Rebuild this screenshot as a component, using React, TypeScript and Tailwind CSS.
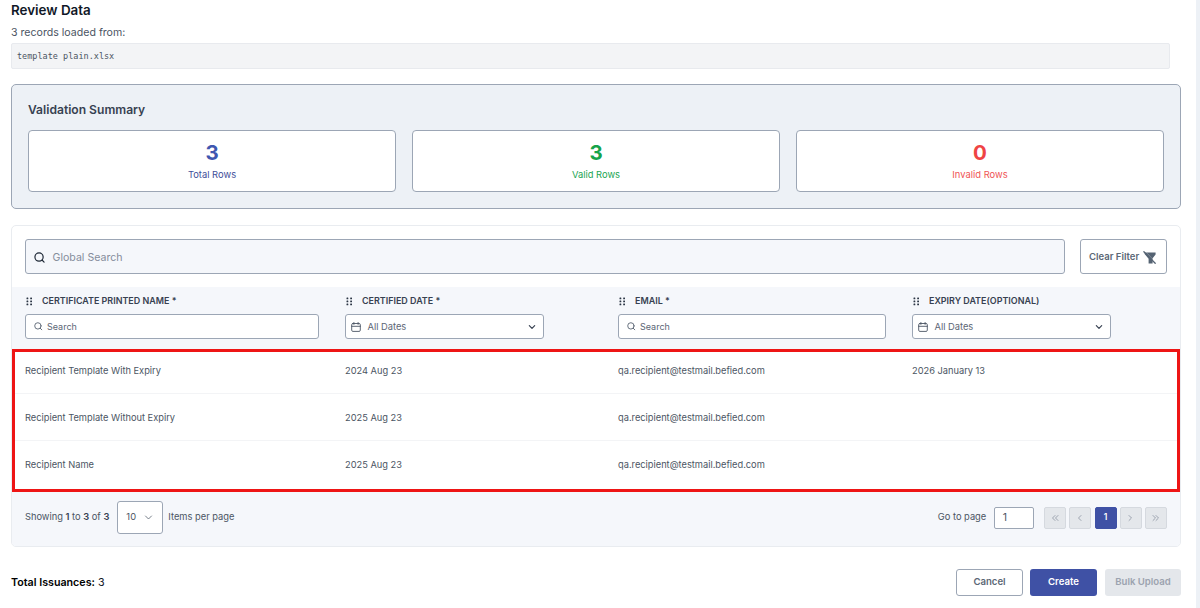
import type { ReactNode } from "react";

function SearchIcon({ className }: { className: string }) {
  return (
    <svg viewBox="0 0 24 24" fill="none" stroke="currentColor" strokeWidth="2.6" strokeLinecap="round" className={className}>
      <circle cx="11" cy="11" r="9" />
      <path d="M17.5 17.5 22 22" />
    </svg>
  );
}

function Chevron({ className, width = 2.6 }: { className: string; width?: number }) {
  return (
    <svg viewBox="0 0 24 24" fill="none" stroke="currentColor" strokeWidth={width} strokeLinecap="round" strokeLinejoin="round" className={className}>
      <path d="m4 8 8 8 8-8" />
    </svg>
  );
}

function CalendarIcon() {
  return (
    <svg viewBox="0 0 10 10" fill="none" stroke="currentColor" strokeWidth="0.9" strokeLinecap="round" className="size-[10px] shrink-0 text-[#4b5563]">
      <rect x="0.7" y="1.5" width="8.6" height="7.9" rx="1.2" />
      <path d="M0.7 4.3h8.6M2.9 0.5v1.9M7.1 0.5v1.9" />
    </svg>
  );
}

function GripIcon() {
  return (
    <svg viewBox="0 0 7 9" fill="#2b3544" className="mt-px h-[9px] w-[7px] shrink-0">
      {[0.5, 3.5, 6.5].map((y) => (
        <g key={y}>
          <rect x="0.5" y={y} width="1.8" height="1.8" rx="0.5" />
          <rect x="4.2" y={y} width="1.8" height="1.8" rx="0.5" />
        </g>
      ))}
    </svg>
  );
}

function FilterOffIcon() {
  return (
    <svg viewBox="0 0 14 14" className="mt-[2px] size-[14px] shrink-0 text-[#556373]">
      <path d="M1.6 1.4h11v2L9.6 7.2v5.2l-4 .2V7.8L1.6 3z" fill="currentColor" />
      <path d="M3.2 1.4 12.9 11.4" stroke="white" strokeOpacity="0.55" strokeWidth="0.5" />
      <path d="M.9 .8 12.2 12.2" stroke="currentColor" strokeWidth="1.3" strokeLinecap="round" />
    </svg>
  );
}

function Stat({ value, label, tone, labelTone }: { value: number; label: string; tone: string; labelTone: string }) {
  return (
    <div className="flex h-[62px] flex-col items-center rounded-[4px] border border-[#9ca6b5] bg-white pt-[10px]">
      <div className={`text-[20.5px] leading-[24px] font-bold ${tone}`}>{value}</div>
      <div className={`mt-[3px] text-[9.4px] leading-[14px] ${labelTone}`}>{label}</div>
    </div>
  );
}

function Column({ title, kind }: { title: string; kind: "search" | "date" }) {
  return (
    <div className="pt-[7px]">
      <div className="flex h-[14px] items-center gap-[9.5px] pl-[0.5px] text-[8.95px] font-semibold whitespace-nowrap text-[#374151]">
        <GripIcon />
        <span>{title}</span>
      </div>
      {kind === "search" ? (
        <div className="mt-[6px] flex h-[25px] items-center rounded-[3px] border border-[#9ca6b5] bg-white pl-[8px] text-[9px] text-[#5b6675]">
          <SearchIcon className="mr-[4.5px] size-[8.5px]" />
          Search
        </div>
      ) : (
        <div className="mt-[6px] flex h-[25px] w-[199px] items-center rounded-[3px] border border-[#9ca6b5] bg-white pr-[7px] pl-[5px] text-[9.3px] text-[#5b6675]">
          <CalendarIcon />
          <span className="ml-[6.5px] grow">All Dates</span>
          <Chevron className="size-[8px] text-[#374151]" width={3.6} />
        </div>
      )}
    </div>
  );
}

const rows = [
  ["Recipient Template With Expiry", "2024 Aug 23", "qa.recipient@testmail.befied.com", "2026 January 13"],
  ["Recipient Template Without Expiry", "2025 Aug 23", "qa.recipient@testmail.befied.com", ""],
  ["Recipient Name", "2025 Aug 23", "qa.recipient@testmail.befied.com", ""],
];

function PageButton({ active, children }: { active?: boolean; children: ReactNode }) {
  return (
    <button
      className={`flex h-[22px] w-[22px] items-center justify-center rounded-[2px] border ${
        active ? "border-[#3f51a5] bg-[#3f51a5] pb-px text-[8.5px] font-semibold text-white" : "border-[#d5d9df] bg-[#e4e7eb] text-[#9ca3af]"
      }`}
    >
      {children}
    </button>
  );
}

function Arrow({ d }: { d: string }) {
  return (
    <svg viewBox="0 0 8 8" fill="none" stroke="currentColor" strokeWidth="1" strokeLinecap="round" strokeLinejoin="round" className="mr-px size-[8px]">
      <path d={d} />
    </svg>
  );
}

export default function App() {
  return (
    <div className="flex h-[608px] w-[1200px] overflow-hidden bg-white font-['Inter',sans-serif] text-[#4b5563]">
      <main className="w-[1196px] pl-[11px]">
        <h1 className="pt-[1px] text-[13.4px] leading-[18px] font-semibold text-[#111827]">Review Data</h1>
        <p className="mt-[6px] text-[10.6px] leading-[15px]">3 records loaded from:</p>
        <div className="mt-[3px] flex h-[26px] w-[1159px] items-center rounded-[2px] border border-[#e8eaee] bg-[#f3f4f6] pl-[5px] font-['DejaVu_Sans_Mono',monospace] text-[8.5px]">
          template plain.xlsx
        </div>

        <section className="mt-[15px] h-[125px] w-[1170px] rounded-[5px] border border-[#9ca6b5] bg-[#edf1f6] px-[16px] pt-[16px]">
          <h2 className="text-[12.1px] leading-[18px] font-semibold text-[#374151]">Validation Summary</h2>
          <div className="mt-[11px] grid grid-cols-3 gap-[16px]">
            <Stat value={3} label="Total Rows" tone="text-[#3f57b0]" labelTone="text-[#3f4f99]" />
            <Stat value={3} label="Valid Rows" tone="text-[#16a34a]" labelTone="text-[#22a552]" />
            <Stat value={0} label="Invalid Rows" tone="text-[#ef4444]" labelTone="text-[#ef5555]" />
          </div>
        </section>

        <section className="mt-[16px] h-[322px] w-[1170px] overflow-hidden rounded-[5px] border border-[#e9ecf0]">
          <div className="flex h-[61px] gap-[15px] px-[13px] pt-[13px]">
            <div className="flex h-[35px] w-[1040px] items-center rounded-[3px] border border-[#9ca6b5] bg-[#f5f7fb] pl-[8px] text-[10.6px] text-[#858d9b]">
              <SearchIcon className="mt-px mr-[7.5px] size-[11px] text-[#1f2937]" />
              <span className="pt-[2px]">Global Search</span>
            </div>
            <button className="flex h-[35px] w-[87px] items-center rounded-[3px] border border-[#9ca6b5] pl-[8px] text-[9.5px] font-semibold whitespace-nowrap text-[#5b6776]">
              <span className="mr-[3.5px] pt-px">Clear Filter</span>
              <FilterOffIcon />
            </button>
          </div>
          <div className="grid h-[62px] grid-cols-[320px_273px_294px_199px] bg-[#f5f7fb] pl-[13px]">
            <div className="pr-[26px]">
              <Column title="CERTIFICATE PRINTED NAME *" kind="search" />
            </div>
            <Column title="CERTIFIED DATE *" kind="date" />
            <div className="pr-[26px]">
              <Column title="EMAIL *" kind="search" />
            </div>
            <Column title="EXPIRY DATE(OPTIONAL)" kind="date" />
          </div>
          <div className="h-[143px] border-[3px] border-[#ee1515]">
            {rows.map((row, i) => (
              <div
                key={i}
                className={`grid grid-cols-[320px_273px_294px_1fr] items-center pl-[10px] text-[9.28px] ${
                  i === 0 ? "h-[42px] pb-[3.5px]" : "h-[47px] pt-[1.5px]"
                } ${i < 2 ? "border-b border-[#f3f4f6]" : ""}`}
              >
                {row.map((cell, j) => (
                  <span key={j}>{cell}</span>
                ))}
              </div>
            ))}
          </div>
          <div className="flex h-[55px] items-center bg-[#f5f7fb] pr-[13px] pb-[4px] pl-[13px] text-[9.3px]">
            <span className="pb-px">
              Showing <b className="font-semibold text-[#374151]">1</b> to <b className="font-semibold text-[#374151]">3</b> of{" "}
              <b className="font-semibold text-[#374151]">3</b>
            </span>
            <div className="ml-[8px] flex h-[33px] w-[46px] items-center justify-between rounded-[3px] border border-[#9ca6b5] bg-white pr-[9.5px] pl-[8px]">
              <span className="pb-px">10</span>
              <Chevron className="size-[9px]" width={2} />
            </div>
            <span className="ml-[5px] grow pb-px">Items per page</span>
            <span className="pb-px">Go to page</span>
            <div className="ml-[8px] flex h-[22px] w-[40px] items-center rounded-[2px] border border-[#9ca6b5] bg-white pt-px pl-[7.5px] text-[10.5px]">1</div>
            <div className="ml-[10px] flex gap-[3.2px]">
              <PageButton><Arrow d="M4 1.5 1.5 4 4 6.5M7 1.5 4.5 4 7 6.5" /></PageButton>
              <PageButton><Arrow d="M5 1.5 2.5 4 5 6.5" /></PageButton>
              <PageButton active>1</PageButton>
              <PageButton><Arrow d="M3 1.5 5.5 4 3 6.5" /></PageButton>
              <PageButton><Arrow d="M1 1.5 3.5 4 1 6.5M4 1.5 6.5 4 4 6.5" /></PageButton>
            </div>
          </div>
        </section>

        <footer className="mt-[21px] flex h-[28px] w-[1170px] items-center text-[10.7px] text-[#111827]">
          <span className="grow pt-[2px]">
            <b className="font-semibold text-black">Total Issuances:</b> 3
          </span>
          <div className="flex h-[27px] text-[9.6px] font-semibold">
            <button className="w-[67px] rounded-[3px] border border-[#9ca6b5] text-[#5b6776]">Cancel</button>
            <button className="ml-[7px] w-[67px] rounded-[3px] bg-[#3f51a5] text-white">Create</button>
            <button className="ml-[8px] w-[76px] rounded-[3px] bg-[#e4e7eb] text-[#9ca3af]">Bulk Upload</button>
          </div>
        </footer>
      </main>
      <div className="w-[4px] bg-[#edf1f6]" />
    </div>
  );
}
